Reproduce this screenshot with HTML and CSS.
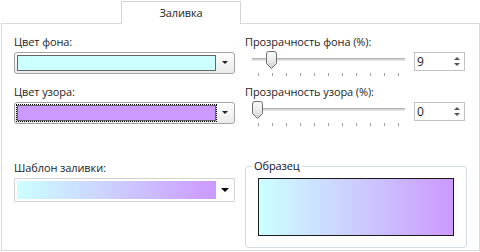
FILE: index.html
```html
<!DOCTYPE html>
<html lang="ru">
<head>
    <meta charset="UTF-8">
    <title>Заливка</title>
    <link rel="stylesheet" href="styles.css">
</head>
<body>
    <div class="tabs">
        <div class="tab">Заливка</div>
    </div>

    <div class="panel">
        <div class="grid">
            <div class="field">
                <div class="label">Цвет фона:</div>
                <div class="combo">
                    <div class="swatch swatch-bg"></div>
                    <div class="arrow"></div>
                </div>
            </div>

            <div class="field">
                <div class="label">Прозрачность фона (%):</div>
                <div class="slider-row">
                    <div class="slider">
                        <div class="track"></div>
                        <svg class="thumb" style="left: 21px" width="11" height="18" viewBox="0 0 11 18">
                            <defs>
                                <linearGradient id="tg1" x1="0" y1="0" x2="0" y2="1">
                                    <stop offset="0" stop-color="#fafafa"/>
                                    <stop offset="0.5" stop-color="#ececec"/>
                                    <stop offset="1" stop-color="#cfcfcf"/>
                                </linearGradient>
                            </defs>
                            <path d="M0.5 3 Q0.5 0.5 3 0.5 H8 Q10.5 0.5 10.5 3 V12.5 L5.5 17.5 L0.5 12.5 Z" fill="url(#tg1)" stroke="#6f6f6f"/>
                        </svg>
                        <div class="ticks">
                            <span></span><span></span><span></span><span></span><span></span><span></span>
                            <span></span><span></span><span></span><span></span><span></span>
                        </div>
                    </div>
                    <div class="spin">
                        <span class="spin-value">9</span>
                        <span class="spin-arrows"><i class="up"></i><i class="down"></i></span>
                    </div>
                </div>
            </div>

            <div class="field">
                <div class="label">Цвет узора:</div>
                <div class="combo">
                    <div class="swatch swatch-fg focused"></div>
                    <div class="arrow"></div>
                </div>
            </div>

            <div class="field">
                <div class="label">Прозрачность узора (%):</div>
                <div class="slider-row">
                    <div class="slider">
                        <div class="track"></div>
                        <svg class="thumb" style="left: 7px" width="11" height="18" viewBox="0 0 11 18">
                            <defs>
                                <linearGradient id="tg2" x1="0" y1="0" x2="0" y2="1">
                                    <stop offset="0" stop-color="#fafafa"/>
                                    <stop offset="0.5" stop-color="#ececec"/>
                                    <stop offset="1" stop-color="#cfcfcf"/>
                                </linearGradient>
                            </defs>
                            <path d="M0.5 3 Q0.5 0.5 3 0.5 H8 Q10.5 0.5 10.5 3 V12.5 L5.5 17.5 L0.5 12.5 Z" fill="url(#tg2)" stroke="#6f6f6f"/>
                        </svg>
                        <div class="ticks">
                            <span></span><span></span><span></span><span></span><span></span><span></span>
                            <span></span><span></span><span></span><span></span><span></span>
                        </div>
                    </div>
                    <div class="spin">
                        <span class="spin-value">0</span>
                        <span class="spin-arrows"><i class="up"></i><i class="down"></i></span>
                    </div>
                </div>
            </div>

            <div class="field pattern">
                <div class="label">Шаблон заливки:</div>
                <div class="combo flat">
                    <div class="swatch swatch-grad"></div>
                    <div class="arrow big"></div>
                </div>
            </div>

            <div class="group">
                <div class="legend">Образец</div>
                <div class="preview"></div>
            </div>
        </div>
    </div>
</body>
</html>
```

FILE: styles.css
```css
* {
    margin: 0;
    padding: 0;
    box-sizing: border-box;
}
body {
    background: #ffffff;
    color: #1e1e1e;
    font-family: 'Open Sans', 'Noto Sans', sans-serif;
    font-size: 11px;
    letter-spacing: -0.1px;
    width: 480px;
    height: 252px;
    overflow: hidden;
}
.tabs {
    height: 23px;
    padding: 1px 0 0 121px;
}
.tab {
    position: relative;
    z-index: 1;
    width: 120px;
    height: 23px;
    border: 1px solid #d4d4d4;
    border-bottom: none;
    background: #ffffff;
    text-align: center;
    line-height: 21px;
}
.panel {
    margin-left: 1px;
    width: 479px;
    height: 228px;
    border: 1px solid #d9d9d9;
    padding: 10px 0 0 12px;
}
.grid {
    display: grid;
    grid-template-columns: 221px 222px;
    column-gap: 10px;
    row-gap: 10px;
}
.label {
    height: 16px;
    line-height: 16px;
    margin-bottom: 2px;
    white-space: nowrap;
}

/* color combo */
.combo {
    display: flex;
    align-items: center;
    height: 22px;
    border: 1px solid #a3a3a3;
    border-radius: 3px;
    background: linear-gradient(#fdfdfd, #ebebeb);
    padding: 0 0 0 2px;
}
.swatch {
    width: 199px;
    height: 16px;
    border: 1px solid #646464;
}
.swatch-bg {
    background: #ccffff;
}
.swatch-fg {
    background: #cc99ff;
}
.focused {
    outline: 1px dotted #000000;
}
.arrow {
    flex: 1;
    height: 4px;
    display: flex;
    justify-content: center;
}
.arrow::after {
    content: '';
    border-left: 3px solid transparent;
    border-right: 3px solid transparent;
    border-top: 3px solid #222222;
}
.arrow.big::after {
    border-left-width: 4px;
    border-right-width: 4px;
    border-top-width: 4px;
    border-top-color: #000000;
}

/* pattern combo */
.pattern {
    margin-top: 26px;
}
.combo.flat {
    height: 24px;
    border-color: #d2d2d2;
    border-radius: 1px;
    background: #ffffff;
}
.swatch-grad {
    height: 18px;
    border: none;
    background: linear-gradient(to right, #ccffff, #cc99ff);
}

/* trackbar */
.slider-row {
    display: flex;
    gap: 6px;
    height: 22px;
}
.slider {
    position: relative;
    width: 163px;
    height: 22px;
}
.track {
    margin: 6px 0 0 7px;
    width: 153px;
    height: 3px;
    border-top: 1px solid #b4b4b4;
    border-bottom: 1px solid #e4e4e4;
    background: #d6d6d6;
}
.thumb {
    position: absolute;
    top: -1px;
}
.ticks {
    display: flex;
    gap: 13px;
    margin: 12px 0 0 13px;
}
.ticks span {
    width: 1px;
    height: 3px;
    background: #a0a0a0;
}

/* numeric box */
.spin {
    display: flex;
    align-items: center;
    width: 51px;
    height: 19px;
    border: 1px solid #c2c2c2;
    padding-left: 2px;
}
.spin-value {
    flex: 1;
    font-size: 12px;
    color: #1a1a1a;
}
.spin-arrows {
    display: flex;
    flex-direction: column;
    gap: 3px;
    width: 14px;
    align-items: center;
}
.spin-arrows i {
    width: 0;
    height: 0;
    border-left: 3px solid transparent;
    border-right: 3px solid transparent;
}
.spin-arrows .up {
    border-bottom: 3px solid #555555;
}
.spin-arrows .down {
    border-top: 3px solid #555555;
}

/* sample group */
.group {
    position: relative;
    margin-top: 32px;
    height: 82px;
    border: 1px solid #d5dde3;
    border-radius: 3px;
    padding: 11px 12px;
}
.legend {
    position: absolute;
    top: -8px;
    left: 6px;
    padding: 0 2px;
    background: #ffffff;
    line-height: 14px;
    color: #101030;
}
.preview {
    height: 58px;
    border: 1px solid #1a1a1a;
    background: linear-gradient(to right, #ccffff, #cc99ff);
}
```
